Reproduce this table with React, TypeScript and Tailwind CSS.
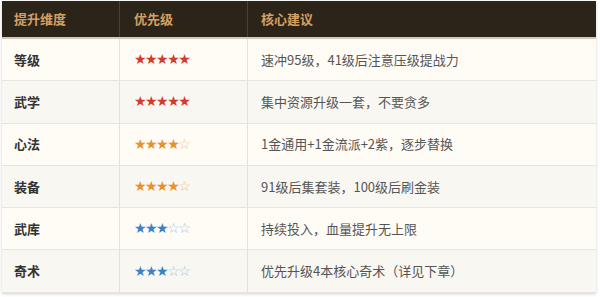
import React from "react";

type Row = { name: string; filled: number; tone: "red" | "orange" | "blue"; tip: string };

const rows: Row[] = [
  { name: "等级", filled: 5, tone: "red", tip: "速冲95级，41级后注意压级提战力" },
  { name: "武学", filled: 5, tone: "red", tip: "集中资源升级一套，不要贪多" },
  { name: "心法", filled: 4, tone: "orange", tip: "1金通用+1金流派+2紫，逐步替换" },
  { name: "装备", filled: 4, tone: "orange", tip: "91级后集套装，100级后刷金装" },
  { name: "武库", filled: 3, tone: "blue", tip: "持续投入，血量提升无上限" },
  { name: "奇术", filled: 3, tone: "blue", tip: "优先升级4本核心奇术（详见下章）" },
];

const toneClass = {
  red: { on: "text-[#d63a2a]", off: "text-[#e9a195]" },
  orange: { on: "text-[#e8922c]", off: "text-[#f0bd87]" },
  blue: { on: "text-[#3b83c8]", off: "text-[#9cc0e2]" },
};

function Stars({ filled, tone }: { filled: number; tone: Row["tone"] }) {
  const c = toneClass[tone];
  return (
    <span className="text-[14px] tracking-[-1.5px] font-['DejaVu_Sans',sans-serif]">
      <span className={c.on}>{"★".repeat(filled)}</span>
      <span className={c.off}>{"☆".repeat(5 - filled)}</span>
    </span>
  );
}

export default function App() {
  return (
    <div className="w-[600px] h-[297px] bg-white pl-[2px] pr-[4px] pt-[1px] font-['Noto_Sans_CJK_SC','Noto_Sans',sans-serif]">
      <div className="shadow-[0_1px_3px_rgba(0,0,0,0.18)]">
        <div className="grid grid-cols-[118px_128px_1fr] h-[38px] bg-[#2c2419] border-b-2 border-[#cfc8bc] text-[13px] font-bold text-[#d3a064]">
          <div className="flex items-center px-[12px] border-r border-[#4a4134]">提升维度</div>
          <div className="flex items-center px-[14px] border-r border-[#4a4134]">优先级</div>
          <div className="flex items-center px-[13px]">核心建议</div>
        </div>
        {rows.map((r, i) => (
          <div
            key={r.name}
            className={`grid grid-cols-[118px_128px_1fr] h-[42.3px] border-b border-[#e9e5dd] text-[13px] ${
              i % 2 === 0 ? "bg-[#fffcf6]" : "bg-[#f9f7f2]"
            }`}
          >
            <div className="flex items-center px-[12px] border-r border-[#e6e1d8] font-bold text-[#333]">{r.name}</div>
            <div className="flex items-center px-[14px] border-r border-[#e6e1d8]">
              <Stars filled={r.filled} tone={r.tone} />
            </div>
            <div className="flex items-center px-[13px] text-[#555]">{r.tip}</div>
          </div>
        ))}
      </div>
    </div>
  );
}
